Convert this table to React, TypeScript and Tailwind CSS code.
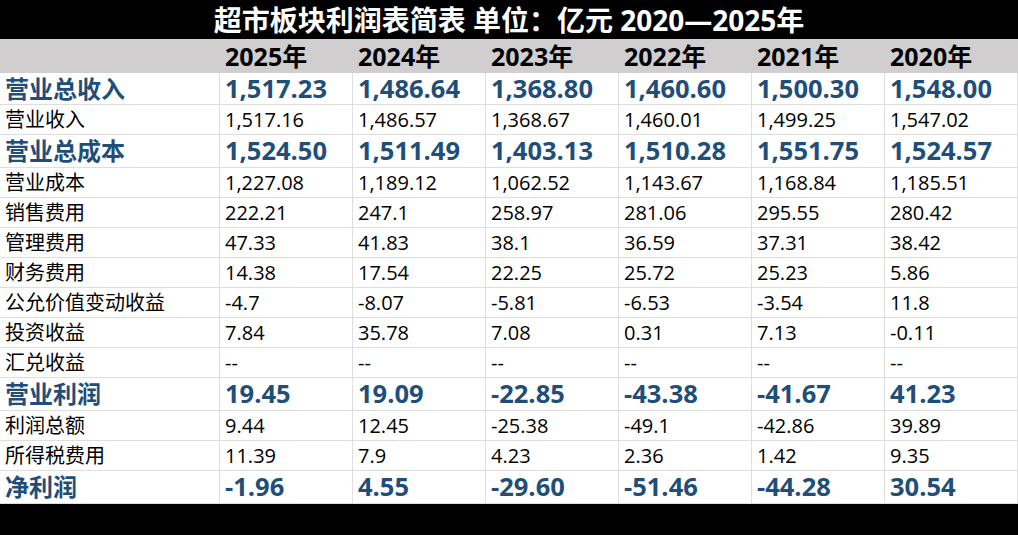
import React from "react";

type Row = { label: string; vals: string[]; bold?: boolean; h: string };

const rows: Row[] = [
  { label: "营业总收入", vals: ["1,517.23", "1,486.64", "1,368.80", "1,460.60", "1,500.30", "1,548.00"], bold: true, h: "h-[32px]" },
  { label: "营业收入", vals: ["1,517.16", "1,486.57", "1,368.67", "1,460.01", "1,499.25", "1,547.02"], h: "h-[30px]" },
  { label: "营业总成本", vals: ["1,524.50", "1,511.49", "1,403.13", "1,510.28", "1,551.75", "1,524.57"], bold: true, h: "h-[33px]" },
  { label: "营业成本", vals: ["1,227.08", "1,189.12", "1,062.52", "1,143.67", "1,168.84", "1,185.51"], h: "h-[30px]" },
  { label: "销售费用", vals: ["222.21", "247.1", "258.97", "281.06", "295.55", "280.42"], h: "h-[30px]" },
  { label: "管理费用", vals: ["47.33", "41.83", "38.1", "36.59", "37.31", "38.42"], h: "h-[30px]" },
  { label: "财务费用", vals: ["14.38", "17.54", "22.25", "25.72", "25.23", "5.86"], h: "h-[30px]" },
  { label: "公允价值变动收益", vals: ["-4.7", "-8.07", "-5.81", "-6.53", "-3.54", "11.8"], h: "h-[30px]" },
  { label: "投资收益", vals: ["7.84", "35.78", "7.08", "0.31", "7.13", "-0.11"], h: "h-[30px]" },
  { label: "汇兑收益", vals: ["--", "--", "--", "--", "--", "--"], h: "h-[30px]" },
  { label: "营业利润", vals: ["19.45", "19.09", "-22.85", "-43.38", "-41.67", "41.23"], bold: true, h: "h-[33px]" },
  { label: "利润总额", vals: ["9.44", "12.45", "-25.38", "-49.1", "-42.86", "39.89"], h: "h-[30px]" },
  { label: "所得税费用", vals: ["11.39", "7.9", "4.23", "2.36", "1.42", "9.35"], h: "h-[30px]" },
  { label: "净利润", vals: ["-1.96", "4.55", "-29.60", "-51.46", "-44.28", "30.54"], bold: true, h: "h-[33px]" },
];

const years = ["2025年", "2024年", "2023年", "2022年", "2021年", "2020年"];

const font = { fontFamily: '"Open Sans","Noto Sans CJK SC",sans-serif' };

export default function App() {
  return (
    <div className="w-[1018px] h-[535px] bg-black flex flex-col overflow-hidden" style={font}>
      <div className="h-[39px] flex items-center justify-center text-white font-bold text-[28px] leading-none">
        超市板块利润表简表 单位：亿元 2020—2025年
      </div>
      <div className="flex flex-col bg-white">
        <div className="grid grid-cols-[220px_repeat(6,133px)] h-[34px] bg-[#d0cece]">
          <div />
          {years.map((y) => (
            <div key={y} className="flex items-center pl-[5px] font-bold text-[25px] text-black leading-none">
              {y}
            </div>
          ))}
        </div>
        {rows.map((r) => (
          <div key={r.label} className={`grid grid-cols-[220px_repeat(6,133px)] ${r.h}`}>
            <div
              className={`flex items-center pl-[5px] border-r border-b border-[#dedede] leading-none whitespace-nowrap ${
                r.bold ? "font-bold text-[24px] text-[#1f4e79]" : "text-[20px] text-black"
              }`}
            >
              {r.label}
            </div>
            {r.vals.map((v, i) => (
              <div
                key={i}
                className={`flex items-center pl-[5px] border-r border-b border-[#dedede] leading-none whitespace-nowrap ${
                  r.bold ? "font-bold text-[25.5px] text-[#1f4e79]" : "text-[20px] text-black"
                }`}
              >
                {v}
              </div>
            ))}
          </div>
        ))}
      </div>
      <div className="flex-1 bg-black" />
    </div>
  );
}
